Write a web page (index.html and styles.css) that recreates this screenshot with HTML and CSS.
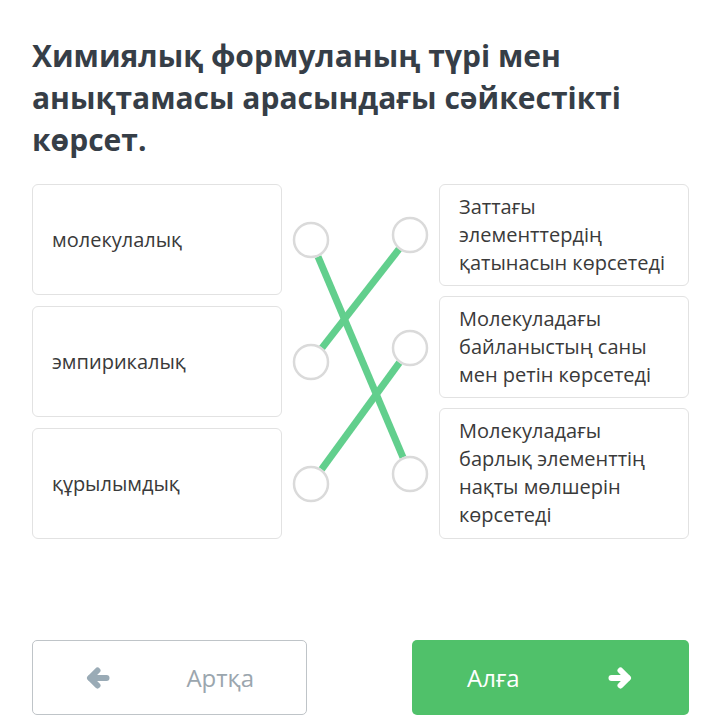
FILE: index.html
```html
<!DOCTYPE html>
<html lang="kk">
<head>
<meta charset="utf-8">
<link rel="stylesheet" href="styles.css">
</head>
<body>
<main class="page">
  <h1 class="title">Химиялық формуланың түрі мен анықтамасы арасындағы сәйкестікті көрсет.</h1>
  <section class="match">
    <div class="col col-left">
      <div class="card card-left">молекулалық</div>
      <div class="card card-left">эмпирикалық</div>
      <div class="card card-left">құрылымдық</div>
    </div>
    <div class="links">
      <svg class="links-svg" width="157" height="355" viewBox="0 0 157 355">
        <g class="wire">
          <line x1="36" y1="72.6" x2="121" y2="273.4"/>
          <line x1="40" y1="163.8" x2="117" y2="65.2"/>
          <line x1="39.6" y1="285.4" x2="117.4" y2="178.6"/>
        </g>
        <g class="dot">
          <circle cx="29" cy="56" r="17"/>
          <circle cx="29" cy="178" r="17"/>
          <circle cx="29" cy="300" r="17"/>
          <circle cx="128" cy="51" r="17"/>
          <circle cx="128" cy="164" r="17"/>
          <circle cx="128" cy="290" r="17"/>
        </g>
      </svg>
    </div>
    <div class="col col-right">
      <div class="card card-right">Заттағы элементтердің қатынасын көрсетеді</div>
      <div class="card card-right">Молекуладағы байланыстың саны мен ретін көрсетеді</div>
      <div class="card card-right">Молекуладағы барлық элементтің нақты мөлшерін көрсетеді</div>
    </div>
  </section>
  <nav class="actions">
    <button class="btn btn-back">
      <svg class="arrow" width="24" height="22" viewBox="0 0 24 22"><polyline points="11.5,3.5 4,11 11.5,18.5"/><line x1="4.5" y1="11" x2="20.5" y2="11"/></svg>
      <span>Артқа</span>
    </button>
    <button class="btn btn-next">
      <span>Алға</span>
      <svg class="arrow" width="24" height="22" viewBox="0 0 24 22"><polyline points="12.5,3.5 20,11 12.5,18.5"/><line x1="3.5" y1="11" x2="19.5" y2="11"/></svg>
    </button>
  </nav>
</main>
</body>
</html>
```

FILE: styles.css
```css
* { box-sizing: border-box; }
html, body { margin: 0; padding: 0; background: #ffffff; }
body { font-family: "Open Sans", "Noto Sans", sans-serif; }

.page {
  width: 720px;
  height: 720px;
  padding: 35px 31px 0 32px;
  overflow: hidden;
}

.title {
  margin: 0;
  font-size: 30px;
  line-height: 42px;
  font-weight: 700;
  color: #363e47;
}

.match {
  margin-top: 23px;
  display: grid;
  grid-template-columns: 250px 157px 250px;
  height: 355px;
}

.col {
  display: flex;
  flex-direction: column;
}
.col-left { gap: 11px; }
.col-right { gap: 10px; }

.card {
  border: 1px solid #e2e2e2;
  border-radius: 6px;
  background: #fff;
  color: #3a3a3a;
  font-size: 20px;
  line-height: 28px;
  padding: 8px 19px;
}
.card-left {
  height: 111px;
  display: flex;
  align-items: center;
}
.card-right:nth-child(1),
.card-right:nth-child(2) { height: 102px; }
.card-right:nth-child(3) { height: 131px; }

.links { position: relative; }
.links-svg { display: block; }
.wire line {
  stroke: #62cf8d;
  stroke-width: 7;
}
.dot circle {
  fill: #ffffff;
  stroke: #dadada;
  stroke-width: 2.5;
}

.actions {
  margin-top: 101px;
  display: flex;
  justify-content: space-between;
}

.btn {
  height: 75px;
  border-radius: 5px;
  font-family: "Open Sans", "Noto Sans", sans-serif;
  font-size: 24px;
  display: flex;
  align-items: center;
  justify-content: space-between;
  cursor: pointer;
}
.arrow { display: block; }
.arrow polyline,
.arrow line {
  fill: none;
  stroke-width: 6;
  stroke-linecap: round;
  stroke-linejoin: round;
}
.btn-back {
  width: 275px;
  background: #fff;
  border: 1px solid #bfc4c8;
  color: #9ba6ae;
  padding: 0 52px 0 85px;
}
.btn-back {
  padding-left: 53px;
}
.btn-back .arrow polyline,
.btn-back .arrow line { stroke: #9aabb6; }
.btn-next {
  width: 277px;
  background: #50c16a;
  border: none;
  color: #ffffff;
  padding: 0 57px 0 55px;
}
.btn-next .arrow polyline,
.btn-next .arrow line { stroke: #ffffff; }
```
